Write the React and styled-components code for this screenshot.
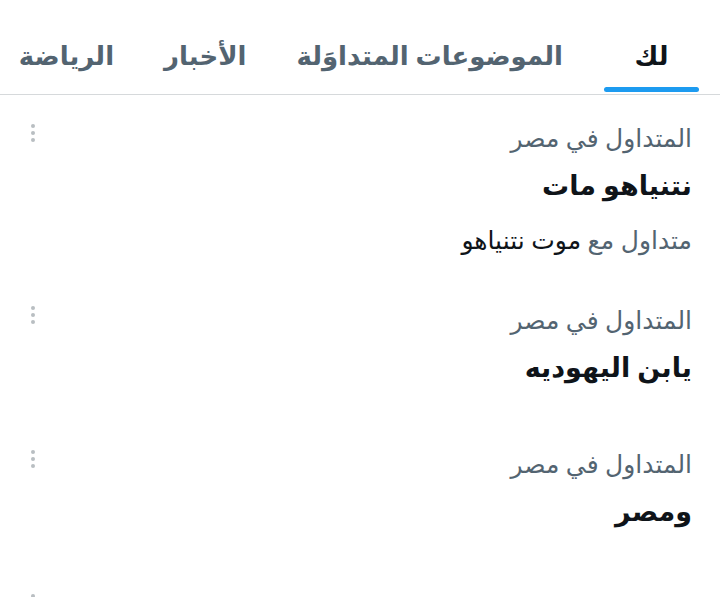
import styled, { createGlobalStyle } from "styled-components";

const GlobalStyle = createGlobalStyle`
  body {
    margin: 0;
    background: #ffffff;
    font-family: "Noto Sans", "DejaVu Sans", sans-serif;
  }
`;

const tabs = ["لك", "الموضوعات المتداوَلة", "الأخبار", "الرياضة"];

const trends = [
  { place: "المتداول في مصر", title: "نتنياهو مات", note: "متداول مع", topic: "موت نتنياهو" },
  { place: "المتداول في مصر", title: "يابن اليهوديه" },
  { place: "المتداول في مصر", title: "ومصر" },
  { place: "المتداول في مصر", title: "" },
];

const Dots = () => (
  <svg width="8" height="20" viewBox="0 0 8 20">
    <circle cx="4" cy="3" r="2" fill="#b9bec2" />
    <circle cx="4" cy="10" r="2" fill="#b9bec2" />
    <circle cx="4" cy="17" r="2" fill="#b9bec2" />
  </svg>
);

const App = () => {
  return (
    <Page dir="rtl">
      <GlobalStyle />
      <TabBar>
        {tabs.map((t, i) => (
          <Tab key={t} $active={i === 0}>
            <TabLabel $active={i === 0}>{t}</TabLabel>
          </Tab>
        ))}
      </TabBar>
      <List>
        {trends.map((tr, i) => (
          <Trend key={i}>
            <TrendText>
              <Place>{tr.place}</Place>
              {tr.title && <Title>{tr.title}</Title>}
              {tr.note && (
                <Note>
                  {tr.note} <Topic>{tr.topic}</Topic>
                </Note>
              )}
            </TrendText>
            <More>
              <Dots />
            </More>
          </Trend>
        ))}
      </List>
    </Page>
  );
};

const Page = styled.div`
  width: 720px;
  height: 597px;
  overflow: hidden;
  background: #ffffff;
`;

const TabBar = styled.div`
  display: flex;
  align-items: stretch;
  height: 94px;
  padding-right: 21px;
  border-bottom: 1px solid #d6d9db;
`;

const Tab = styled.div`
  position: relative;
  display: flex;
  align-items: flex-end;
  justify-content: center;
  padding: 0 ${({ $active }) => ($active ? "31px" : "25px")};
  margin-left: ${({ $active }) => ($active ? "16px" : "0")};
  min-width: ${({ $active }) => ($active ? "95px" : "auto")};
  box-sizing: border-box;

  &::after {
    content: "";
    display: ${({ $active }) => ($active ? "block" : "none")};
    position: absolute;
    left: 0;
    right: 0;
    bottom: 2px;
    height: 5px;
    border-radius: 3px;
    background: #1d9bf0;
  }
`;

const TabLabel = styled.span`
  font-size: 26px;
  font-weight: 700;
  line-height: 1;
  padding-bottom: 26px;
  color: ${({ $active }) => ($active ? "#0f1419" : "#536471")};
  white-space: nowrap;
`;

const List = styled.div`
  display: flex;
  flex-direction: column;
`;

const Trend = styled.div`
  display: flex;
  justify-content: space-between;
  align-items: flex-start;
  padding: 26px 28px 0 29px;
  min-height: 118px;
`;

const TrendText = styled.div`
  display: flex;
  flex-direction: column;
`;

const Place = styled.div`
  font-size: 25px;
  color: #536471;
  line-height: 32px;
`;

const Title = styled.div`
  font-size: 27px;
  font-weight: 700;
  color: #0f1419;
  line-height: 36px;
  margin-top: 14px;
`;

const Note = styled.div`
  font-size: 25px;
  color: #536471;
  line-height: 32px;
  margin-top: 20px;
  margin-bottom: 22px;
`;

const Topic = styled.span`
  color: #0f1419;
`;

const More = styled.div`
  display: flex;
  padding-top: 2px;
`;

export default App;
